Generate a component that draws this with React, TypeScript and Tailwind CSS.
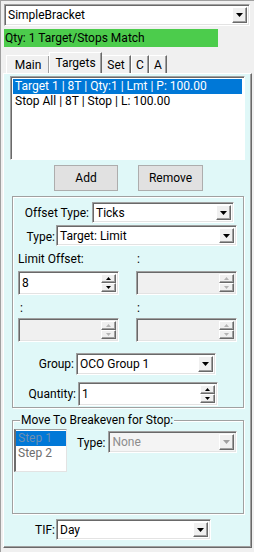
import React from 'react';

const font = "font-['Roboto','Liberation_Sans',Arial,sans-serif]";

function Arrow({ disabled = false }: { disabled?: boolean }) {
    return (
        <svg width="7" height="4" viewBox="0 0 7 4">
            <path d="M0 0H7L3.5 4Z" fill={disabled ? '#a0a0a0' : '#000'} />
        </svg>
    );
}

function Combo({ value, width, disabled = false, height = 'h-[21px]' }: { value: string; width: string; disabled?: boolean; height?: string }) {
    return (
        <div
            className={`${width} ${height} flex items-stretch border border-t-[#a0a0a0] border-l-[#a0a0a0] border-r-white border-b-white shadow-[inset_1px_1px_0_#696969,inset_-1px_-1px_0_#e3e3e3] p-[2px] ${
                disabled ? 'bg-[#f4f4f4]' : 'bg-white'
            }`}
        >
            <div className={`flex-1 flex items-center pl-[1px] leading-none ${disabled ? 'text-[#8d8d8d]' : 'text-black'}`}>{value}</div>
            <div className="w-[15px] flex items-center justify-center bg-[#f0f0f0] border border-t-white border-l-white border-r-[#696969] border-b-[#696969] shadow-[inset_-1px_-1px_0_#a0a0a0]">
                <Arrow disabled={disabled} />
            </div>
        </div>
    );
}

function SpinBtn({ up, disabled }: { up: boolean; disabled: boolean }) {
    return (
        <div className="flex-1 flex items-center justify-center bg-[#f0f0f0] border border-t-white border-l-white border-r-[#696969] border-b-[#696969] shadow-[inset_-1px_-1px_0_#a0a0a0]">
            <svg width="5" height="3" viewBox="0 0 5 3">
                <path d={up ? 'M2.5 0L5 3H0Z' : 'M0 0H5L2.5 3Z'} fill={disabled ? '#b4b4b4' : '#000'} />
            </svg>
        </div>
    );
}

function Spin({ value = '', width, disabled = false }: { value?: string; width: string; disabled?: boolean }) {
    return (
        <div
            className={`${width} h-[24px] flex items-stretch border border-t-[#a0a0a0] border-l-[#a0a0a0] border-r-white border-b-white shadow-[inset_1px_1px_0_#696969,inset_-1px_-1px_0_#e3e3e3] p-[2px] ${
                disabled ? 'bg-[#f0f0f0]' : 'bg-white'
            }`}
        >
            <div className="flex-1 flex items-center pl-[1px] leading-none">{value}</div>
            <div className="w-[15px] flex flex-col">
                <SpinBtn up disabled={disabled} />
                <SpinBtn up={false} disabled={disabled} />
            </div>
        </div>
    );
}

function Tab({ label, active = false, width }: { label: string; active?: boolean; width: string }) {
    return (
        <div
            className={`${width} flex items-center justify-center border border-b-0 border-t-white border-l-white border-r-[#696969] shadow-[inset_-1px_0_0_#a0a0a0] bg-[#f0f0f0] ${
                active ? 'h-[21px] -mx-[1px] relative z-10 pb-[1px]' : 'h-[18px]'
            }`}
        >
            {label}
        </div>
    );
}

function Button({ label, width }: { label: string; width: string }) {
    return (
        <div className={`${width} h-[26px] flex items-center justify-center bg-[#e1e1e1] border border-[#adadad]`}>
            {label}
        </div>
    );
}

export default function App() {
    return (
        <div className={`w-[254px] h-[552px] bg-[#f0f0f0] text-[12px] text-black overflow-hidden ${font} border-l border-t border-[#a0a0a0] flex flex-col`}>
            <div className="mt-[3px] ml-[3px] mr-[3px]">
                <Combo value="SimpleBracket" width="w-[246px]" height="h-[22px]" />
            </div>
            <div className="mt-[3px] ml-[3px] w-[214px] h-[18px] bg-[#4ccc4c] flex items-center pl-[1px] leading-none">
                Qty: 1 Target/Stops Match
            </div>

            <div className="mt-[5px] ml-[5px] flex items-end h-[21px]">
                <Tab label="Main" width="w-[44px]" />
                <Tab label="Targets" width="w-[53px]" active />
                <Tab label="Set" width="w-[30px]" />
                <Tab label="C" width="w-[18px]" />
                <Tab label="A" width="w-[18px]" />
            </div>

            <div className="ml-[2px] w-[249px] h-[475px] bg-[#e0f8f8] border border-t-white border-l-white border-r-[#696969] border-b-[#696969] shadow-[inset_-1px_-1px_0_#a0a0a0] flex flex-col">
                {/* order list */}
                <div className="mt-[2px] ml-[6px] w-[235px] h-[84px] bg-white border border-t-[#a0a0a0] border-l-[#a0a0a0] border-r-white border-b-white shadow-[inset_1px_1px_0_#696969] p-[2px] leading-[15px]">
                    <div className="bg-[#0078d7] text-white pl-[2px]">Target 1 | 8T | Qty:1 | Lmt | P: 100.00</div>
                    <div className="pl-[2px]">Stop All | 8T | Stop | L: 100.00</div>
                </div>

                <div className="mt-[5px] flex">
                    <div className="ml-[50px]">
                        <Button label="Add" width="w-[64px]" />
                    </div>
                    <div className="ml-[20px]">
                        <Button label="Remove" width="w-[65px]" />
                    </div>
                </div>

                {/* target settings */}
                <div className="mt-[5px] ml-[8px] w-[232px] h-[212px] border border-[#a0a0a0] shadow-[inset_1px_1px_0_#fff,1px_1px_0_#fff] flex flex-col">
                    <div className="mt-[5px] flex items-center">
                        <div className="w-[79px] text-right pr-[3px]">Offset Type:</div>
                        <Combo value="Ticks" width="w-[142px]" />
                    </div>
                    <div className="mt-[2px] flex items-start">
                        <div className="w-[43px] text-right pr-[1px] mt-[3px]">Type:</div>
                        <Combo value="Target: Limit" width="w-[181px]" />
                    </div>
                    <div className="mt-[6px] flex leading-[15px]">
                        <div className="ml-[5px] w-[119px]">Limit Offset:</div>
                        <div>:</div>
                    </div>
                    <div className="mt-[4px] flex">
                        <div className="ml-[5px]">
                            <Spin value="8" width="w-[101px]" />
                        </div>
                        <div className="ml-[17px]">
                            <Spin width="w-[101px]" disabled />
                        </div>
                    </div>
                    <div className="mt-[6px] flex leading-[15px]">
                        <div className="ml-[7px] w-[117px]">:</div>
                        <div>:</div>
                    </div>
                    <div className="mt-[2px] flex">
                        <div className="ml-[5px]">
                            <Spin width="w-[101px]" disabled />
                        </div>
                        <div className="ml-[17px]">
                            <Spin width="w-[101px]" disabled />
                        </div>
                    </div>
                    <div className="mt-[11px] flex items-center">
                        <div className="w-[63px] text-right pr-[2px]">Group:</div>
                        <Combo value="OCO Group 1" width="w-[140px]" height="h-[22px]" />
                    </div>
                    <div className="mt-[7px] flex items-center">
                        <div className="w-[65px] text-right pr-[2px]">Quantity:</div>
                        <Spin value="1" width="w-[140px]" />
                    </div>
                </div>

                {/* breakeven */}
                <div className="mt-[12px] ml-[8px] w-[232px] h-[94px] border border-[#a0a0a0] shadow-[inset_1px_1px_0_#fff,1px_1px_0_#fff] relative">
                    <div className="absolute -top-[8px] left-[7px] px-[1px] bg-[#e0f8f8] leading-[15px]">Move To Breakeven for Stop:</div>
                    <div className="mt-[8px] flex items-start">
                        <div className="ml-[1px] w-[53px] h-[43px] bg-white border-l-2 border-l-[#6d6d6d] border-t border-t-[#a0a0a0] border-r border-r-[#e3e3e3] border-b border-b-[#e3e3e3] pt-[1px] leading-[15px] text-[#6d6d6d]">
                            <div className="bg-[#0078d7] text-[#6d8fb0] pl-[2px]">Step 1</div>
                            <div className="pl-[2px]">Step 2</div>
                        </div>
                        <div className="ml-[10px] mt-[5px]">Type:</div>
                        <div className="ml-[3px] mt-[2px]">
                            <Combo value="None" width="w-[129px]" height="h-[22px]" disabled />
                        </div>
                    </div>
                </div>

                <div className="mt-[5px] flex items-center">
                    <div className="w-[52px] text-right pr-[1px]">TIF:</div>
                    <Combo value="Day" width="w-[155px]" />
                </div>
            </div>
        </div>
    );
}
